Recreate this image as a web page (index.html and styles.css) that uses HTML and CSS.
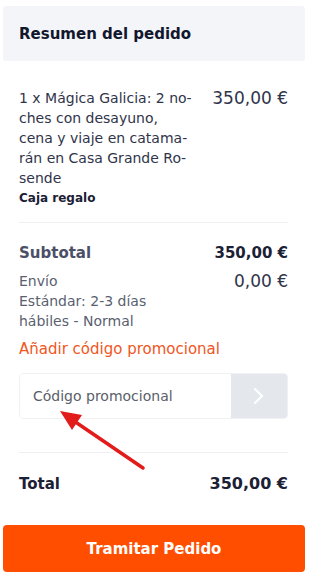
FILE: index.html
```html
<!DOCTYPE html>
<html lang="es">
<head>
    <meta charset="UTF-8">
    <meta name="viewport" content="width=device-width, initial-scale=1.0">
    <title>Resumen del pedido</title>
    <link rel="stylesheet" href="styles.css">
</head>
<body>
    <main class="summary">
        <div class="summary-head">
            <h2>Resumen del pedido</h2>
        </div>

        <div class="summary-body">
            <div class="item">
                <div class="item-info">
                    <p class="item-name">1 x Mágica Galicia: 2 no&shy;ches con desayuno, cena y viaje en catama&shy;rán en Casa Grande Ro&shy;sende</p>
                    <p class="item-extra">Caja regalo</p>
                </div>
                <span class="item-price">350,00 €</span>
            </div>

            <hr class="divider">

            <div class="row row--subtotal">
                <span>Subtotal</span>
                <span class="amount">350,00 €</span>
            </div>
            <div class="row row--shipping">
                <div>
                    <p>Envío</p>
                    <p>Estándar: 2-3 días hábiles - Normal</p>
                </div>
                <span>0,00 €</span>
            </div>

            <a class="promo-link" href="#">Añadir código promocional</a>

            <form class="promo">
                <input class="promo-input" type="text" placeholder="Código promocional">
                <button class="promo-btn" type="button" aria-label="Aplicar">
                    <svg width="14" height="20" viewBox="0 0 14 20"><path d="M3 3l7 7-7 7" fill="none" stroke="#fff" stroke-width="2.2" stroke-linecap="round" stroke-linejoin="round"/></svg>
                </button>
            </form>

            <hr class="divider divider--total">

            <div class="row row--total">
                <span>Total</span>
                <span class="amount">350,00 €</span>
            </div>
        </div>

        <button class="checkout" type="button">Tramitar Pedido</button>

        <!-- annotation arrow over the promo input -->
        <svg class="arrow" width="100" height="72" viewBox="0 0 100 72">
            <line x1="92" y1="68" x2="23" y2="21" stroke="#e21b1b" stroke-width="3.5" stroke-linecap="round"/>
            <polygon points="9,11 31,15 21,30" fill="#e21b1b"/>
        </svg>
    </main>
</body>
</html>
```

FILE: styles.css
```css
*,
*::after,
*::before {
  box-sizing: border-box;
  margin: 0;
  padding: 0;
}

body {
  font-family: 'DejaVu Sans', 'Open Sans', sans-serif;
  color: #1b2035;
  background: #fff;
  width: 330px;
}

.summary {
  position: relative;
  width: 302px;
  margin: 6px 0 0 3px;
}

.summary-head {
  background-color: #f4f5f8;
  border-radius: 3px;
  height: 55px;
  display: flex;
  align-items: center;
  padding: 0 16px;
}

.summary-head h2 {
  font-size: 15px;
  font-weight: bold;
  color: #12172e;
}

.summary-body {
  padding: 27px 17px 0 16px;
}

.item {
  display: flex;
  justify-content: space-between;
  gap: 10px;
}

.item-info {
  width: 176px;
}

.item-name {
  font-size: 14px;
  line-height: 20px;
  color: #30344a;
  hyphens: manual;
}

.item-extra {
  font-size: 12px;
  font-weight: bold;
  line-height: 20px;
  color: #1b2035;
}

.item-price {
  font-size: 17px;
  line-height: 20px;
  color: #30344a;
  white-space: nowrap;
}

.divider {
  border: 0;
  border-top: 1px solid #eef0f3;
  margin: 14px 0 19px;
}

.row {
  display: flex;
  justify-content: space-between;
}

.row--subtotal {
  font-size: 15px;
  font-weight: bold;
  line-height: 22px;
  color: #4b5068;
}

.row--subtotal .amount {
  color: #1b2035;
}

.row--shipping {
  margin-top: 7px;
  font-size: 14px;
  line-height: 20px;
  color: #5a5f70;
}

.row--shipping > div {
  width: 150px;
}

.row--shipping > span {
  font-size: 17px;
  color: #30344a;
}

.promo-link {
  display: block;
  margin-top: 8px;
  font-size: 15px;
  line-height: 20px;
  color: #f0561e;
  text-decoration: none;
}

.promo {
  display: flex;
  margin-top: 14px;
  height: 46px;
  border: 1px solid #f0f1f4;
  border-radius: 4px;
  overflow: hidden;
}

.promo-input {
  flex: 1;
  min-width: 0;
  border: 0;
  padding: 0 13px;
  font-family: inherit;
  font-size: 14px;
  color: #555;
  outline: none;
}

.promo-input::placeholder {
  color: #5b5e68;
}

.promo-btn {
  width: 56px;
  border: 0;
  background-color: #e4e7ec;
  display: flex;
  align-items: center;
  justify-content: center;
}

.divider--total {
  margin: 33px 0 20px;
}

.row--total {
  font-size: 15px;
  font-weight: bold;
  line-height: 22px;
  color: #1b2035;
}

.row--total .amount {
  font-size: 16px;
}

.checkout {
  display: block;
  width: 100%;
  height: 47px;
  margin-top: 30px;
  border: 0;
  border-radius: 4px;
  background-color: #ff4e00;
  color: #fff;
  font-family: inherit;
  font-size: 15px;
  font-weight: bold;
}

.arrow {
  position: absolute;
  left: 48px;
  top: 394px;
}
```
